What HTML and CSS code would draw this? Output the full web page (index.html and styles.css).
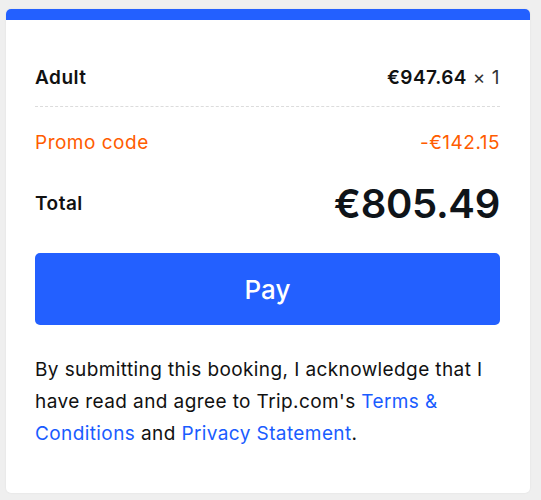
FILE: index.html
```html
<!DOCTYPE html>
<html lang="en">
<head>
<meta charset="utf-8">
<title>Price summary</title>
<link rel="stylesheet" href="styles.css">
</head>
<body>
  <section class="summary">
    <div class="summary-bar"></div>
    <div class="summary-body">
      <div class="row row-adult">
        <span class="label-strong">Adult</span>
        <span class="price"><b>€947.64</b> <span class="qty">× 1</span></span>
      </div>
      <div class="row row-promo">
        <span>Promo code</span>
        <span>-€142.15</span>
      </div>
      <div class="row row-total">
        <span class="label-strong">Total</span>
        <span class="total-amount">€805.49</span>
      </div>
      <button class="pay-btn" type="button">Pay</button>
      <p class="terms">By submitting this booking, I acknowledge that I have read and agree to Trip.com's <a href="#">Terms &amp; Conditions</a> and <a href="#">Privacy Statement</a>.</p>
    </div>
  </section>
</body>
</html>
```

FILE: styles.css
```css
html, body {
  margin: 0;
  padding: 0;
}

body {
  background: #efefef;
  font-family: Inter, "Noto Sans", "Liberation Sans", sans-serif;
  color: #111;
  padding: 9px 11px 7px 6px;
}

.summary {
  width: 524px;
  background: #fff;
  border-radius: 5px;
  box-shadow: 0 0 2px rgba(0, 0, 0, 0.08);
  overflow: hidden;
}

.summary-bar {
  height: 11px;
  background: #2360ff;
}

.summary-body {
  padding: 0 30px 43px 29px;
}

.row {
  display: flex;
  justify-content: space-between;
  align-items: center;
  font-size: 19px;
  line-height: 24px;
  letter-spacing: 0.5px;
}

.row-adult {
  margin-top: 46px;
  padding-bottom: 16px;
  border-bottom: 1px dashed #dcdcdc;
}

.label-strong {
  font-weight: 600;
}

.price b {
  font-weight: 600;
}

.qty {
  font-weight: 400;
  color: #333;
}

.row-promo {
  margin-top: 24px;
  color: #ff5c00;
}

.row-total {
  margin-top: 25px;
  line-height: 48px;
}

.total-amount {
  font-size: 40px;
  font-weight: 600;
  color: #0f1419;
  letter-spacing: -0.3px;
}

.pay-btn {
  display: block;
  width: 100%;
  height: 72px;
  margin-top: 25px;
  border: 0;
  border-radius: 5px;
  background: #2360ff;
  color: #fff;
  font-family: inherit;
  font-size: 26px;
  font-weight: 450;
}

.terms {
  margin: 29px 0 0;
  font-size: 19px;
  line-height: 32px;
  letter-spacing: 0.4px;
  color: #111;
}

.terms a {
  color: #1a5cff;
  text-decoration: none;
}
```
